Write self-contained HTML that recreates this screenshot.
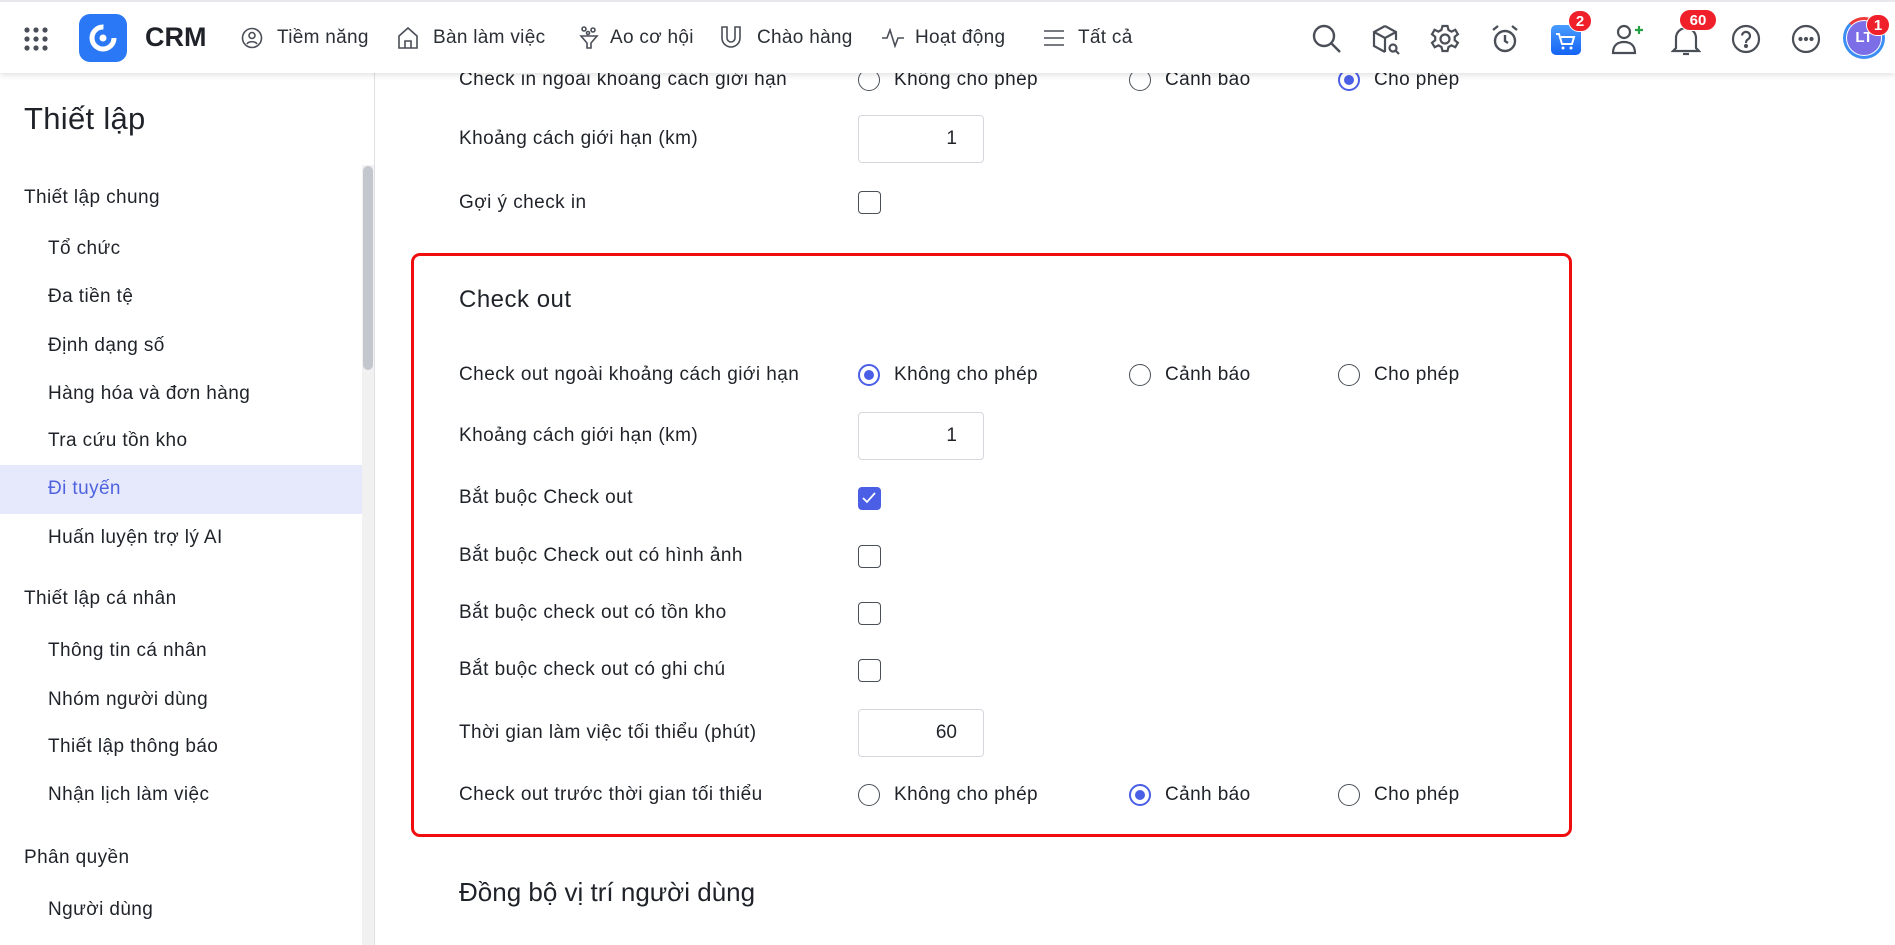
<!DOCTYPE html>
<html><head><meta charset="utf-8"><style>
*{margin:0;padding:0;box-sizing:border-box}
body{width:1895px;height:945px;overflow:hidden;background:#fff;font-family:"Liberation Sans",sans-serif;color:#1f2329;position:relative}
.a{position:absolute;white-space:nowrap}
.hdr{position:absolute;left:0;top:0;width:1895px;height:73px;background:#fff;border-top:2px solid #e6e8eb;box-shadow:0 2px 6px rgba(0,0,0,.12);z-index:5}
.nav{font-size:19px;color:#2b2f36;top:25px;letter-spacing:0.3px}
.ic{position:absolute;top:22px}
.side{font-size:19px;color:#1f2329;letter-spacing:0.4px}
.lab{font-size:19px;color:#1f2329;left:459px;letter-spacing:0.45px}
.rad{position:absolute;width:22px;height:22px;border:1.5px solid #4a4f57;border-radius:50%;background:#fff}
.rad.on{border:2px solid #4a5fe6}
.rad.on:after{content:"";position:absolute;left:4px;top:4px;width:10px;height:10px;border-radius:50%;background:#4a5fe6}
.opt{font-size:19px;color:#1f2329;letter-spacing:0.4px}
.cb{position:absolute;left:858px;width:23px;height:23px;border:1.5px solid #4a4f57;border-radius:4px;background:#fff}
.inp{position:absolute;left:858px;width:126px;height:48px;border:1px solid #d4d7dc;border-radius:4px;font-size:19px;text-align:right;padding-right:26px;line-height:46px;color:#1f2329}
.badge{position:absolute;background:#f0202a;color:#fff;font-weight:bold;font-size:15px;border-radius:11px;height:22px;line-height:22px;text-align:center;border:1.5px solid #fff}
</style></head><body>
<div class="hdr">
 <svg class="ic" style="left:23px;top:24px" width="26" height="26" viewBox="0 0 26 26" fill="#4a4f57"><circle cx="4" cy="4" r="2.6"/><circle cx="13" cy="4" r="2.6"/><circle cx="22" cy="4" r="2.6"/><circle cx="4" cy="13" r="2.6"/><circle cx="13" cy="13" r="2.6"/><circle cx="22" cy="13" r="2.6"/><circle cx="4" cy="22" r="2.6"/><circle cx="13" cy="22" r="2.6"/><circle cx="22" cy="22" r="2.6"/></svg>
 <svg class="ic" style="left:79px;top:12px" width="48" height="48" viewBox="0 0 48 48"><rect width="48" height="48" rx="11" fill="#2a78f5"/><circle cx="24" cy="24" r="11" fill="none" stroke="#fff" stroke-width="5" stroke-dasharray="52 17"/><circle cx="24" cy="24" r="3.5" fill="#fff"/></svg>
 <div class="a" style="left:145px;top:20px;font-size:27px;font-weight:bold;color:#1f2329">CRM</div>
 <svg class="ic" style="left:241px;top:25px" width="22" height="22" viewBox="0 0 22 22" fill="none" stroke="#4a4f57" stroke-width="1.6"><circle cx="11" cy="11" r="9.5"/><circle cx="11" cy="8.5" r="3"/><path d="M6 17c1.5-3 8.5-3 10 0"/></svg>
 <div class="a nav" style="left:277px">Tiềm năng</div>
 <svg class="ic" style="left:397px;top:24px" width="22" height="24" viewBox="0 0 22 24" fill="none" stroke="#4a4f57" stroke-width="1.6"><path d="M2 10L11 2l9 8v12H2z"/><path d="M8 22v-7h6v7"/></svg>
 <div class="a nav" style="left:433px">Bàn làm việc</div>
 <svg class="ic" style="left:579px;top:24px" width="20" height="24" viewBox="0 0 20 24" fill="none" stroke="#4a4f57" stroke-width="1.6"><circle cx="5" cy="3" r="2"/><circle cx="14" cy="4" r="2"/><circle cx="9" cy="7" r="1.5"/><path d="M2 10h16l-6 7v5h-4v-5z"/></svg>
 <div class="a nav" style="left:610px">Ao cơ hội</div>
 <svg class="ic" style="left:720px;top:23px" width="22" height="24" viewBox="0 0 22 24" fill="none" stroke="#4a4f57" stroke-width="1.6"><path d="M2 2h5v11a4 4 0 008 0V2h5v11a9 9 0 01-18 0z"/></svg>
 <div class="a nav" style="left:757px">Chào hàng</div>
 <svg class="ic" style="left:881px;top:26px" width="24" height="20" viewBox="0 0 24 20" fill="none" stroke="#4a4f57" stroke-width="1.6"><path d="M1 10h5l3-8 5 16 3-8h6"/></svg>
 <div class="a nav" style="left:915px">Hoạt động</div>
 <svg class="ic" style="left:1043px;top:27px" width="22" height="18" viewBox="0 0 22 18" stroke="#4a4f57" stroke-width="1.6"><path d="M1 2h20M1 9h20M1 16h20"/></svg>
 <div class="a nav" style="left:1078px">Tất cả</div>

 <svg class="ic" style="left:1311px;top:21px" width="32" height="32" viewBox="0 0 32 32" fill="none" stroke="#4a4f57" stroke-width="2.4"><circle cx="13" cy="13" r="10"/><path d="M20.5 20.5L29 29"/></svg>
 <svg class="ic" style="left:1371px;top:22px" width="30" height="32" viewBox="0 0 30 32" fill="none" stroke="#4a4f57" stroke-width="2.2"><path d="M14 2l11 6v8M14 2L3 8v14l11 6M3 8l11 6 11-6M14 14v14"/><circle cx="22" cy="24" r="3.5"/><path d="M24.5 26.5L28 30"/></svg>
 <svg class="ic" style="left:1430px;top:22px" width="30" height="30" viewBox="0 0 30 30" fill="none" stroke="#4a4f57" stroke-width="2.2"><circle cx="15" cy="15" r="4.5"/><path d="M12.5 2h5l1 4 3 1.6 3.8-1.8 2.6 4.4-3.2 2.6v3.4l3.2 2.6-2.6 4.4-3.8-1.8-3 1.6-1 4h-5l-1-4-3-1.6-3.8 1.8L2 18.8l3.2-2.6v-3.4L2 10.2l2.6-4.4 3.8 1.8 3-1.6z"/></svg>
 <svg class="ic" style="left:1490px;top:22px" width="30" height="30" viewBox="0 0 30 30" fill="none" stroke="#4a4f57" stroke-width="2.4"><circle cx="15" cy="17" r="10"/><path d="M15 11v6l3 2M3 6l5-4M27 6l-5-4"/></svg>
 <svg class="ic" style="left:1551px;top:23px" width="30" height="30" viewBox="0 0 30 30"><defs><linearGradient id="g" x1="0" y1="0" x2="0" y2="1"><stop offset="0" stop-color="#4a9cff"/><stop offset="1" stop-color="#1463f3"/></linearGradient></defs><rect width="30" height="30" rx="5" fill="url(#g)"/><path d="M5 9h3l3 10h10l2-7H10" fill="none" stroke="#fff" stroke-width="2"/><circle cx="12" cy="23" r="1.5" fill="#fff"/><circle cx="20" cy="23" r="1.5" fill="#fff"/></svg>
 <div class="badge" style="left:1568px;top:8px;width:24px">2</div>
 <svg class="ic" style="left:1610px;top:20px" width="34" height="34" viewBox="0 0 34 34" fill="none" stroke="#4a4f57" stroke-width="2.2"><circle cx="14" cy="10" r="6"/><path d="M3 31c0-8 5-11 11-11s11 3 11 11z"/><path d="M25 8h8M29 4v8" stroke="#25a244"/></svg>
 <svg class="ic" style="left:1671px;top:22px" width="30" height="34" viewBox="0 0 30 34" fill="none" stroke="#4a4f57" stroke-width="2.2"><path d="M5 24V14a10 10 0 0120 0v10l3 3H2z"/><path d="M12 30h6"/></svg>
 <div class="badge" style="left:1679px;top:7px;width:38px">60</div>
 <svg class="ic" style="left:1731px;top:22px" width="30" height="30" viewBox="0 0 30 30" fill="none" stroke="#4a4f57" stroke-width="2.2"><circle cx="15" cy="15" r="13"/><path d="M11 11.5a4 4 0 117 3c-2 1.5-3 2-3 4.5"/><circle cx="15" cy="22" r="1" fill="#4a4f57"/></svg>
 <svg class="ic" style="left:1791px;top:22px" width="30" height="30" viewBox="0 0 30 30" fill="none" stroke="#4a4f57" stroke-width="2.2"><circle cx="15" cy="15" r="13"/><circle cx="9.5" cy="15" r="1" fill="#4a4f57"/><circle cx="15" cy="15" r="1" fill="#4a4f57"/><circle cx="20.5" cy="15" r="1" fill="#4a4f57"/></svg>
 <div class="a" style="left:1843px;top:15px;width:42px;height:42px;border-radius:50%;border:3px solid #3c8ef5;border-top-color:#ee3a3a;background:#fff"></div>
 <div class="a" style="left:1847px;top:19px;width:34px;height:34px;border-radius:50%;background:#7b6ee6;color:#fff;font-weight:bold;font-size:15px;text-align:center;line-height:34px">LT</div>
 <div class="badge" style="left:1866px;top:12px;width:24px">1</div>
</div>

<div class="a" style="left:374px;top:73px;width:1px;height:872px;background:#dfe1e5"></div>
<div class="a" style="left:362px;top:165px;width:12px;height:780px;background:#f1f1f1"></div>
<div class="a" style="left:363px;top:166px;width:10px;height:204px;background:#c4c7ce;border-radius:5px"></div>
<div class="a" style="left:24px;top:101px;font-size:31px;color:#1f2329;letter-spacing:0.3px">Thiết lập</div>
<div class="a" style="left:0;top:465px;width:362px;height:49px;background:#e6e9fb"></div>
<div class="a side" style="left:24px;top:187px">Thiết lập chung</div>
<div class="a side" style="left:48px;top:238px">Tổ chức</div>
<div class="a side" style="left:48px;top:286px">Đa tiền tệ</div>
<div class="a side" style="left:48px;top:335px">Định dạng số</div>
<div class="a side" style="left:48px;top:383px">Hàng hóa và đơn hàng</div>
<div class="a side" style="left:48px;top:430px">Tra cứu tồn kho</div>
<div class="a side" style="left:48px;top:478px;color:#4f62e0">Đi tuyến</div>
<div class="a side" style="left:48px;top:527px">Huấn luyện trợ lý AI</div>
<div class="a side" style="left:24px;top:588px">Thiết lập cá nhân</div>
<div class="a side" style="left:48px;top:640px">Thông tin cá nhân</div>
<div class="a side" style="left:48px;top:689px">Nhóm người dùng</div>
<div class="a side" style="left:48px;top:736px">Thiết lập thông báo</div>
<div class="a side" style="left:48px;top:784px">Nhận lịch làm việc</div>
<div class="a side" style="left:24px;top:847px">Phân quyền</div>
<div class="a side" style="left:48px;top:899px">Người dùng</div>

<div class="a lab" style="top:69px">Check in ngoài khoảng cách giới hạn</div>
<div class="rad" style="left:858px;top:69px"></div><div class="a opt" style="left:894px;top:69px">Không cho phép</div>
<div class="rad" style="left:1129px;top:69px"></div><div class="a opt" style="left:1165px;top:69px">Cảnh báo</div>
<div class="rad on" style="left:1338px;top:69px"></div><div class="a opt" style="left:1374px;top:69px">Cho phép</div>
<div class="a lab" style="top:128px">Khoảng cách giới hạn (km)</div>
<div class="inp" style="top:115px">1</div>
<div class="a lab" style="top:192px">Gợi ý check in</div>
<div class="cb" style="top:191px"></div>

<div class="a" style="left:411px;top:253px;width:1161px;height:584px;border:3px solid #f00d0d;border-radius:9px"></div>
<div class="a" style="left:459px;top:286px;font-size:24px;color:#1f2329;letter-spacing:0.5px">Check out</div>
<div class="a lab" style="top:364px">Check out ngoài khoảng cách giới hạn</div>
<div class="rad on" style="left:858px;top:364px"></div><div class="a opt" style="left:894px;top:364px">Không cho phép</div>
<div class="rad" style="left:1129px;top:364px"></div><div class="a opt" style="left:1165px;top:364px">Cảnh báo</div>
<div class="rad" style="left:1338px;top:364px"></div><div class="a opt" style="left:1374px;top:364px">Cho phép</div>
<div class="a lab" style="top:425px">Khoảng cách giới hạn (km)</div>
<div class="inp" style="top:412px">1</div>
<div class="a lab" style="top:487px">Bắt buộc Check out</div>
<div class="cb" style="top:487px;background:#4a5fe6;border-color:#4a5fe6"><svg width="20" height="20" viewBox="0 0 20 20" style="position:absolute;left:0;top:0"><path d="M4 10l4 4 8-9" fill="none" stroke="#fff" stroke-width="1.8"/></svg></div>
<div class="a lab" style="top:545px">Bắt buộc Check out có hình ảnh</div>
<div class="cb" style="top:545px"></div>
<div class="a lab" style="top:602px">Bắt buộc check out có tồn kho</div>
<div class="cb" style="top:602px"></div>
<div class="a lab" style="top:659px">Bắt buộc check out có ghi chú</div>
<div class="cb" style="top:659px"></div>
<div class="a lab" style="top:722px">Thời gian làm việc tối thiểu (phút)</div>
<div class="inp" style="top:709px">60</div>
<div class="a lab" style="top:784px">Check out trước thời gian tối thiểu</div>
<div class="rad" style="left:858px;top:784px"></div><div class="a opt" style="left:894px;top:784px">Không cho phép</div>
<div class="rad on" style="left:1129px;top:784px"></div><div class="a opt" style="left:1165px;top:784px">Cảnh báo</div>
<div class="rad" style="left:1338px;top:784px"></div><div class="a opt" style="left:1374px;top:784px">Cho phép</div>

<div class="a" style="left:459px;top:877px;font-size:26px;color:#1f2329">Đồng bộ vị trí người dùng</div>
</body></html>
